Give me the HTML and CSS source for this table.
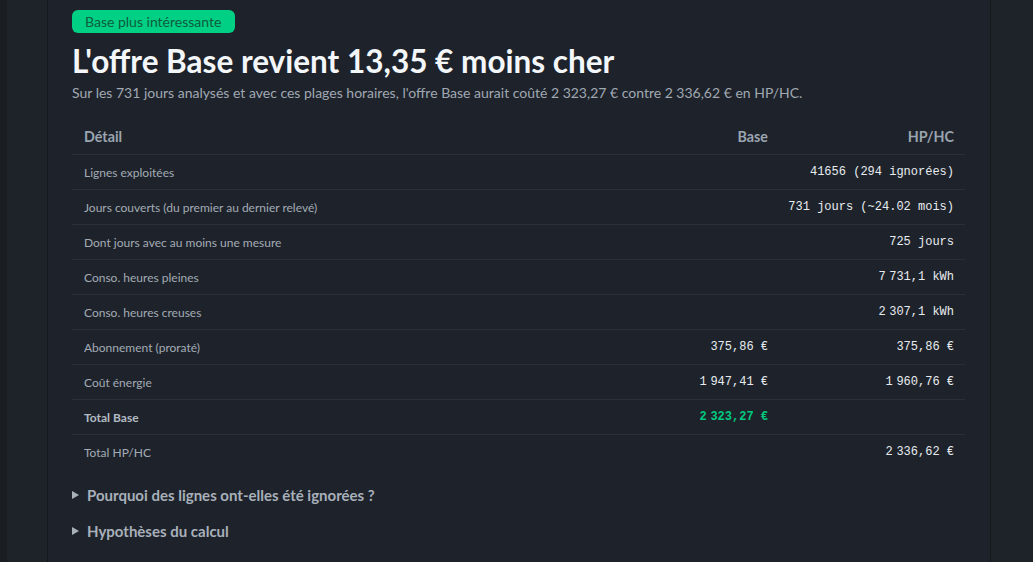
FILE: index.html
```html
<!DOCTYPE html>
<html lang="fr">
<head>
<meta charset="utf-8">
<title>Comparaison Base / HP-HC</title>
<link rel="stylesheet" href="styles.css">
</head>
<body>
<div class="shell">
  <div class="edge"></div>
  <div class="gutter"></div>
  <main class="card">
    <span class="badge">Base plus intéressante</span>
    <h1 class="title">L'offre Base revient 13,35 € moins cher</h1>
    <p class="lead">Sur les 731 jours analysés et avec ces plages horaires, l'offre Base aurait coûté 2&#8239;323,27 € contre 2&#8239;336,62 € en HP/HC.</p>
    <table class="detail">
      <colgroup><col class="c-label"><col class="c-base"><col class="c-hphc"></colgroup>
      <thead>
        <tr><th class="l">Détail</th><th>Base</th><th>HP/HC</th></tr>
      </thead>
      <tbody>
        <tr><td class="l">Lignes exploitées</td><td class="v" colspan="2">41656 (294 ignorées)</td></tr>
        <tr><td class="l">Jours couverts (du premier au dernier relevé)</td><td class="v" colspan="2">731 jours (~24.02 mois)</td></tr>
        <tr><td class="l">Dont jours avec au moins une mesure</td><td class="v" colspan="2">725 jours</td></tr>
        <tr><td class="l">Conso. heures pleines</td><td class="v" colspan="2">7&#8239;731,1 kWh</td></tr>
        <tr><td class="l">Conso. heures creuses</td><td class="v" colspan="2">2&#8239;307,1 kWh</td></tr>
        <tr><td class="l">Abonnement (proraté)</td><td class="v">375,86 €</td><td class="v">375,86 €</td></tr>
        <tr><td class="l">Coût énergie</td><td class="v">1&#8239;947,41 €</td><td class="v">1&#8239;960,76 €</td></tr>
        <tr class="total"><td class="l">Total Base</td><td class="v win">2&#8239;323,27 €</td><td class="v"></td></tr>
        <tr class="last"><td class="l">Total HP/HC</td><td class="v"></td><td class="v">2&#8239;336,62 €</td></tr>
      </tbody>
    </table>
    <details class="more"><summary>Pourquoi des lignes ont-elles été ignorées ?</summary></details>
    <details class="more"><summary>Hypothèses du calcul</summary></details>
  </main>
  <div class="gutter right"></div>
</div>
</body>
</html>
```
FILE: styles.css
```css
html, body {
  margin: 0;
  padding: 0;
  height: 100%;
  background: #1e232a;
  font-family: "Lato", "Noto Sans", sans-serif;
  color: #a8b0ba;
}
.shell {
  display: flex;
  min-height: 562px;
}
.edge {
  width: 7px;
  flex: none;
  background: #1a1d22;
}
.gutter {
  width: 40px;
  flex: none;
  background: #1e232a;
}
.gutter.right {
  width: 42px;
}
.card {
  flex: 1;
  background: #1e232b;
  border-left: 1px solid #15191e;
  border-right: 1px solid #15191e;
  padding: 10px 25px 0 24px;
}
.badge {
  display: inline-block;
  background: #00d084;
  color: #0d5c3e;
  font-size: 14px;
  line-height: 23px;
  padding: 0 14px 0 13px;
  border-radius: 6px;
}
.title {
  margin: 10px 0 0;
  font-size: 31.5px;
  line-height: 36px;
  font-weight: 700;
  color: #f4f7fa;
}
.lead {
  margin: 4px 0 0;
  font-size: 14px;
  line-height: 20px;
  color: #a0a8b2;
}
.detail {
  margin-top: 15px;
  width: 100%;
  border-collapse: collapse;
}
.c-hphc { width: 186px; }
.c-base { width: 200px; }
.detail th {
  font-size: 14.3px;
  font-weight: 700;
  color: #9aa5b1;
  text-align: right;
  padding: 0 11px 0 12px;
  height: 36px;
  border-bottom: 1px solid #2a3038;
}
.detail th.l { text-align: left; }
.detail td {
  height: 34px;
  padding: 0 11px 0 12px;
  border-bottom: 1px solid #2a3038;
  font-size: 12px;
}
.detail tr.last td { border-bottom: none; }
.detail td.l { color: #a3abb5; }
.detail td.v {
  text-align: right;
  font-family: "Liberation Mono", "DejaVu Sans", monospace;
  color: #e8ecf0;
}
.detail tr.total td.l { font-weight: 700; color: #b3bbc4; }
.detail td.win { color: #00c97f; font-weight: 700; }
.more summary {
  font-size: 15px;
  font-weight: 700;
  color: #a8b0ba;
  line-height: 36px;
  cursor: pointer;
  list-style: none;
  display: flex;
  align-items: center;
}
.more summary::before {
  content: "";
  width: 0;
  height: 0;
  border-left: 7px solid #a8b0ba;
  border-top: 4px solid transparent;
  border-bottom: 4px solid transparent;
  margin-right: 8px;
}
.more:first-of-type { margin-top: 8px; }
```
